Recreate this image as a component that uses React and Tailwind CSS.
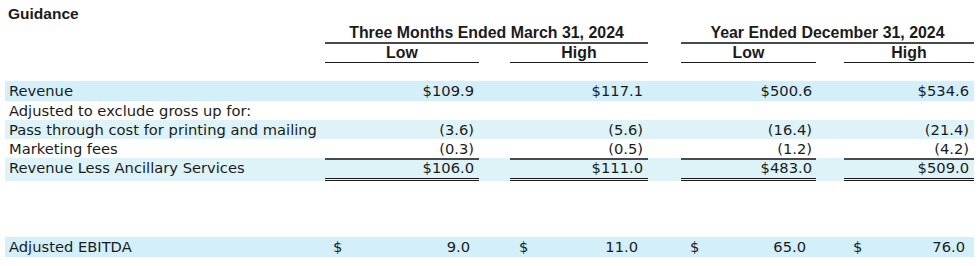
import React from "react";

const COLS = "grid grid-cols-[320px_154px_31px_138px_33px_135px_28px_130px] ml-[5px] w-[969px]";
const TOTAL = "text-right border-t-2 border-b-[3px] border-double border-t-[#4a4a4a] border-b-[#1b1b1b]";

const rows = [
  { label: "Revenue", vals: ["$109.9", "$117.1", "$500.6", "$534.6"], bg: "bg-[#d3effa]", h: "h-[20px]" },
  { label: "Adjusted to exclude gross up for:", vals: ["", "", "", ""], bg: "bg-white", h: "h-[19px]" },
  { label: "Pass through cost for printing and mailing", vals: ["(3.6)", "(5.6)", "(16.4)", "(21.4)"], bg: "bg-[#ddf3f8]", h: "h-[19px]" },
  { label: "Marketing fees", vals: ["(0.3)", "(0.5)", "(1.2)", "(4.2)"], bg: "bg-white", h: "h-[19px]" },
];

function Row({ label, vals, bg, h }) {
  return (
    <div className={`${COLS} ${bg} ${h} leading-[19px]`}>
      <div className="pl-[4px] whitespace-nowrap">{label}</div>
      <div className="text-right pr-[5px]">{vals[0]}</div>
      <div />
      <div className="text-right pr-[5px]">{vals[1]}</div>
      <div />
      <div className="text-right pr-[4px]">{vals[2]}</div>
      <div />
      <div className="text-right pr-[5px]">{vals[3]}</div>
    </div>
  );
}

export default function App() {
  return (
    <div className="w-[980px] h-[266px] bg-white text-[#1b1b1b] text-[14.7px] font-['DejaVu_Sans',sans-serif] overflow-hidden">
      <div className="pt-[4px] pl-[8px] h-[23px] leading-[20px] text-[15.5px] font-bold font-['Liberation_Sans',sans-serif]">Guidance</div>

      {/* period headers */}
      <div className={`${COLS} h-[21px] font-bold font-['Liberation_Sans',sans-serif] text-[15.9px] leading-[19px]`}>
        <div />
        <div className="col-span-3 text-center border-b-2 border-[#4a4a4a]">Three Months Ended March 31, 2024</div>
        <div />
        <div className="col-span-3 text-center border-b-2 border-[#4a4a4a]">Year Ended December 31, 2024</div>
      </div>
      <div className={`${COLS} h-[19px] font-bold font-['Liberation_Sans',sans-serif] text-[15.9px] leading-[18px]`}>
        <div />
        <div className="text-center border-b border-[#1b1b1b]">Low</div>
        <div />
        <div className="text-center border-b border-[#1b1b1b]">High</div>
        <div />
        <div className="text-center border-b border-[#1b1b1b]">Low</div>
        <div />
        <div className="text-center border-b border-[#1b1b1b]">High</div>
      </div>

      <div className="h-[18px]" />

      {rows.map((r) => (
        <Row key={r.label} {...r} />
      ))}

      <div className={`${COLS} bg-[#ddf3f8] h-[23px] leading-[16px]`}>
        <div className="pl-[4px] pt-[2px] whitespace-nowrap">Revenue Less Ancillary Services</div>
        <div className={`${TOTAL} pr-[5px]`} style={{ borderTopStyle: "solid" }}>$106.0</div>
        <div />
        <div className={`${TOTAL} pr-[5px]`} style={{ borderTopStyle: "solid" }}>$111.0</div>
        <div />
        <div className={`${TOTAL} pr-[4px]`} style={{ borderTopStyle: "solid" }}>$483.0</div>
        <div />
        <div className={`${TOTAL} pr-[5px]`} style={{ borderTopStyle: "solid" }}>$509.0</div>
      </div>

      <div className="h-[56px]" />

      <div className={`${COLS} bg-[#d3effa] h-[20px] leading-[19px]`}>
        <div className="pl-[4px]">Adjusted EBITDA</div>
        <div className="flex justify-between pl-[8px] pr-[9px]"><span>$</span><span>9.0</span></div>
        <div />
        <div className="flex justify-between pl-[9px] pr-[10px]"><span>$</span><span>11.0</span></div>
        <div />
        <div className="flex justify-between pl-[9px] pr-[10px]"><span>$</span><span>65.0</span></div>
        <div />
        <div className="flex justify-between pl-[9px] pr-[9px]"><span>$</span><span>76.0</span></div>
      </div>
    </div>
  );
}
